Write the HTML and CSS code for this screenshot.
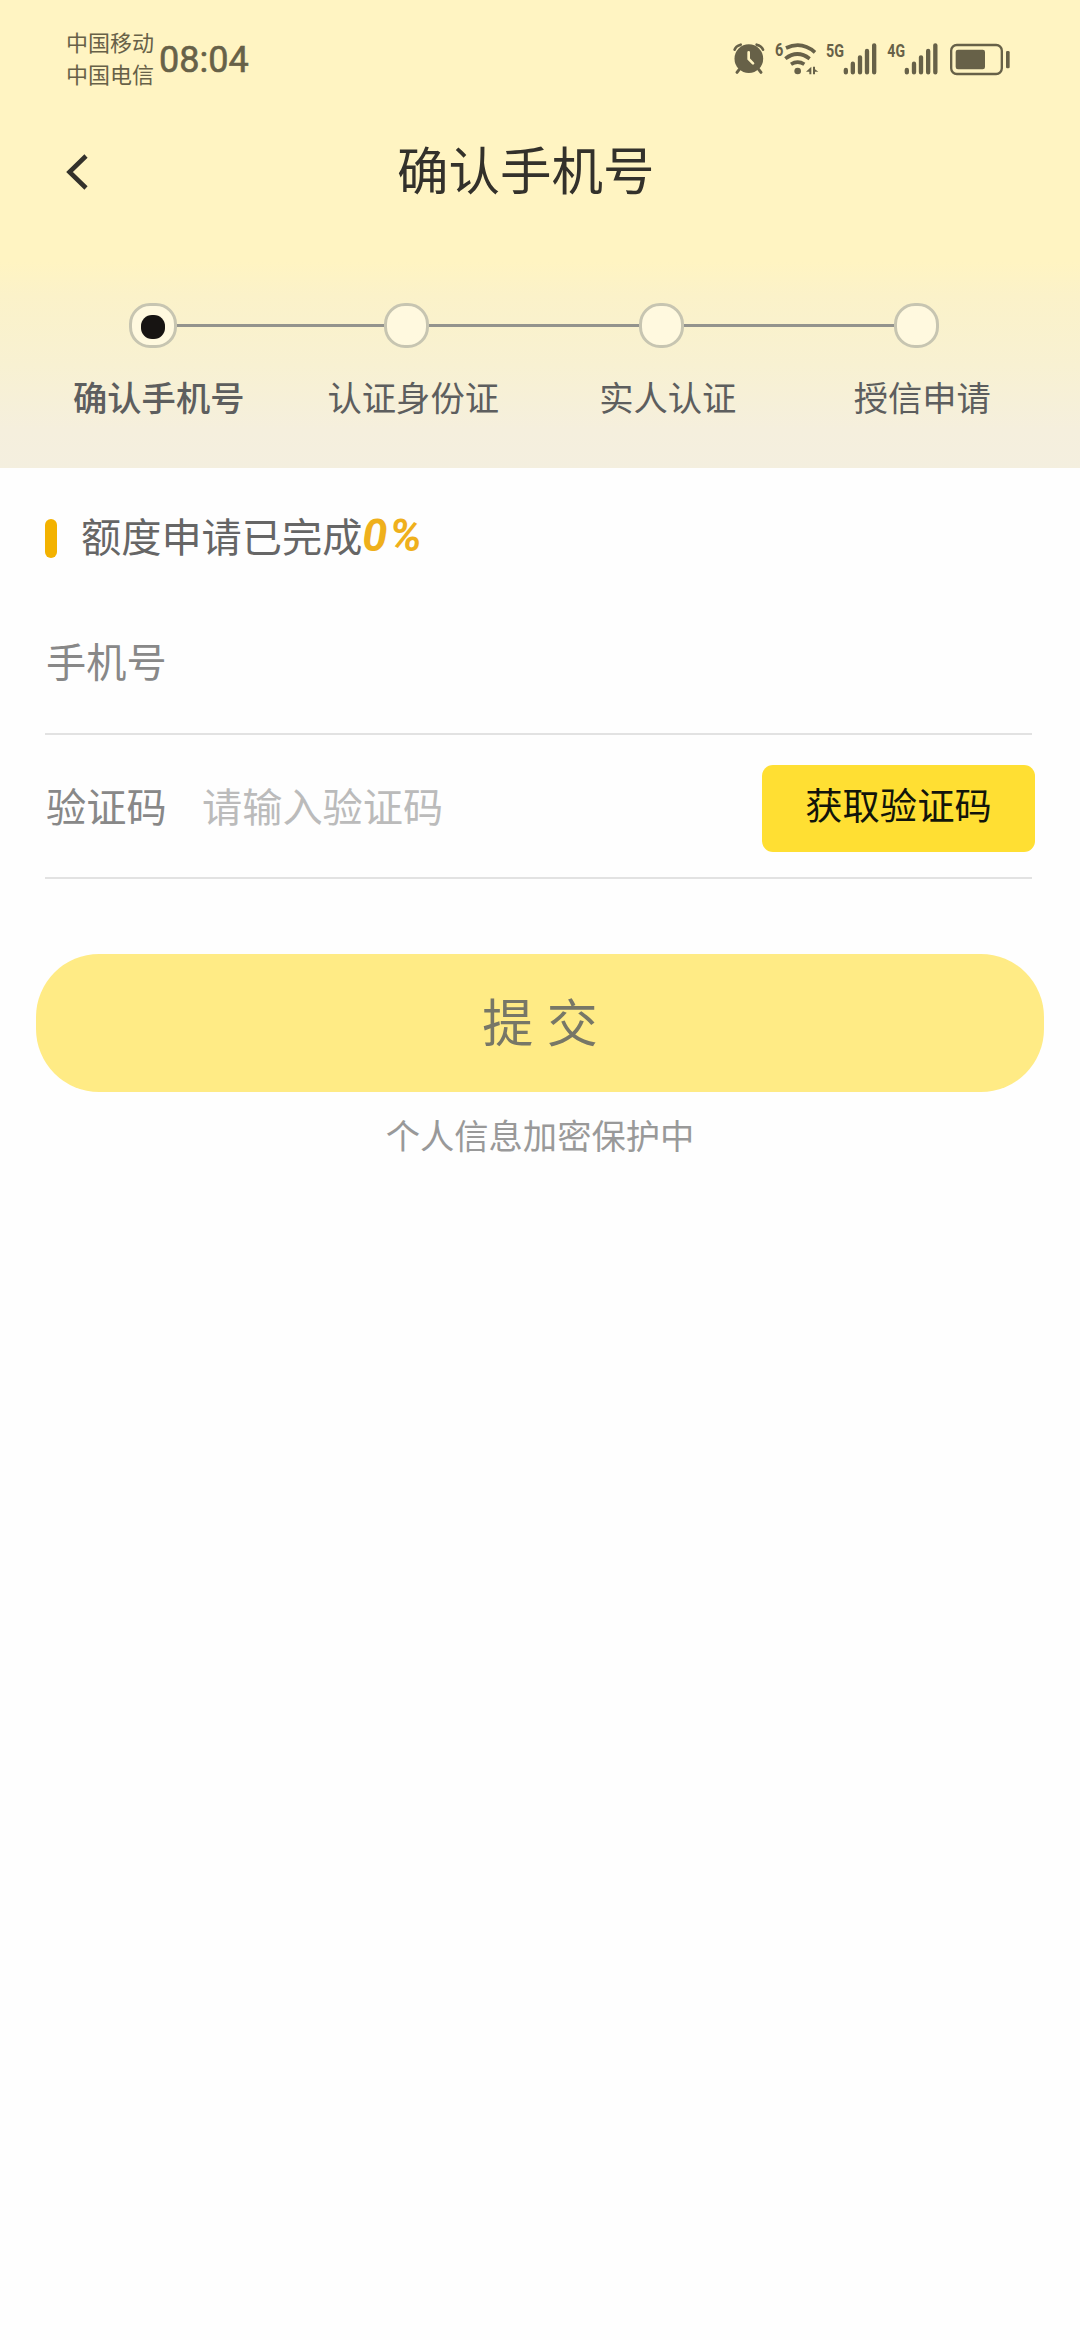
FILE: index.html
```html
<!DOCTYPE html>
<html lang="zh-CN">
<head>
	<meta charset="UTF-8">
	<title>确认手机号</title>
	<link rel="stylesheet" href="styles.css">
</head>
<body>
	<div class="header">
		<!--状态栏-->
		<div class="status">
			<div class="carrier">
				<span>中国移动</span>
				<span>中国电信</span>
			</div>
			<span class="time">08:04</span>
			<svg class="icons" viewBox="0 0 990 240">
				<!--闹钟-->
				<g fill="none" stroke="#676148" stroke-linecap="round">
					<path d="M74 89Q77 78 92 74M140 74Q155 78 159 89" stroke-width="8"/>
					<path d="M88 148L81 157M146 148L153 157" stroke-width="9"/>
				</g>
				<circle cx="116.500" cy="116" r="43" fill="#676148"/>
				<path d="M116 97V117L129 130" fill="none" stroke="#fff4c2" stroke-width="8" stroke-linecap="round"/>
				<!--wifi-->
				<g fill="none" stroke="#676148" stroke-width="11">
					<path d="M228 84Q275 62 315 97"/>
					<path d="M226 116Q262 88 299 116"/>
					<path d="M243 133Q263 120 283 133"/>
				</g>
				<circle cx="263" cy="153" r="10" fill="#676148"/>
				<path d="M304 140V163H298V155H288ZM309 140V163H315V155H325L315 148V140Z" fill="#676148"/>
				<g class="net">
					<text x="195" y="108" textLength="25" lengthAdjust="spacingAndGlyphs">6</text>
					<text x="348" y="111" textLength="54" lengthAdjust="spacingAndGlyphs">5G</text>
					<text x="532" y="111" textLength="53" lengthAdjust="spacingAndGlyphs">4G</text>
				</g>
				<!--信号-->
				<g stroke="#676148" stroke-width="13" stroke-linecap="round">
					<path d="M407.500 150V157M428.500 131V157M450 112V157M471 93V157M492.500 76V157"/>
					<path d="M590.500 150V157M612 131V157M633 112V157M654.500 93V157M676 76V157"/>
				</g>
				<!--电池-->
				<rect x="723.500" y="75" width="152" height="87" rx="17" fill="none" stroke="#676148" stroke-width="7"/>
				<rect x="737" y="89" width="88" height="59" rx="7" fill="#676148"/>
				<rect x="888" y="93" width="11" height="52" rx="4" fill="#676148"/>
			</svg>
		</div>
		<div class="nav">
			<svg class="back" viewBox="0 0 24 38"><path d="M21 3L4.500 19L21 35"/></svg>
			<h1>确认手机号</h1>
		</div>
		<!--步骤条-->
		<div class="rail">
			<span class="dot active"><i></i></span>
			<span class="line first"></span>
			<span class="dot"></span>
			<span class="line"></span>
			<span class="dot"></span>
			<span class="line"></span>
			<span class="dot"></span>
		</div>
		<div class="labels">
			<span class="on">确认手机号</span>
			<span>认证身份证</span>
			<span>实人认证</span>
			<span>授信申请</span>
		</div>
	</div>

	<div class="progress"><span>额度申请已完成</span><em>0%</em></div>
	<div class="row phone">
		<label>手机号</label>
	</div>
	<div class="row">
		<label>验证码</label>
		<input type="text" placeholder="请输入验证码">
		<button class="code">获取验证码</button>
	</div>
	<button class="submit">提 交</button>
	<p class="tip">个人信息加密保护中</p>
</body>
</html>
```

FILE: styles.css
```css
html,body{
	margin: 0;padding: 0;background: #fefefe;
}
body{
	width: 1080px;height: 2340px;overflow: hidden;
	font-family: "Noto Sans CJK SC",sans-serif;
}
input,button{
	font-family: inherit;border: 0;padding: 0;margin: 0;outline: none;
}
.header{
	height: 468px;
	background: linear-gradient(#fff4c2 0,#fff4c2 262px,#fbf2c9 295px,#f8f1d2 365px,#f5efdd 430px,#f4efdf 468px);
}
.status{
	display: flex;height: 120px;
	padding: 0 40px 0 66px;
}
.carrier{
	display: flex;flex-direction: column;
	width: 93px;padding-top: 25px;
	font-size: 22px;line-height: 32px;color: #676148;white-space: nowrap;
}
.time{
	padding-top: 39px;
	font: 400 36px/42px Roboto,sans-serif;color: #676148;
	-webkit-text-stroke: .6px #676148;
}
.icons{
	width: 330px;height: 80px;
	margin: 20px 0 0 auto;
}
.net{
	font-family: Roboto,sans-serif;font-size: 54px;font-weight: 700;fill: #676148;
}
.nav{
	display: flex;align-items: center;height: 100px;
	padding: 0 65px;
}
.back{
	width: 24px;height: 38px;margin-top: 3px;
	fill: none;stroke: #33312b;stroke-width: 4.6;
}
.nav h1{
	margin: 0 0 5px 308px;
	font-size: 51.5px;font-weight: 400;line-height: 70px;color: #33312b;
}
.rail{
	display: flex;align-items: center;
	height: 45px;padding: 83px 0 0 129px;
}
.dot{
	display: flex;align-items: center;justify-content: center;
	box-sizing: border-box;width: 45px;height: 45px;
	border: 3px solid #c7c5b1;border-radius: 21px;background: #fff9df;
}
.active{
	width: 48px;
}
.dot i{
	width: 24px;height: 24px;margin-top: 3px;border-radius: 11px;background: #171412;
}
.line{
	width: 210px;height: 3px;background: #93938d;
}
.first{
	width: 207px;
}
.labels{
	display: grid;grid-template-columns: repeat(4,254.5px);
	padding: 23px 0 0 31.5px;
	font-size: 34.3px;line-height: 50px;color: #5d5e5e;text-align: center;
}
.on{
	font-weight: 500;
}
.progress{
	display: flex;align-items: center;height: 60px;
	margin: 39px 45px 0;
	font-size: 40.2px;line-height: 60px;color: #666;
}
.progress:before{
	content: "";
	width: 12px;height: 39px;margin: 3px 24px 0 0;
	border-radius: 6px;background: #f3b200;
}
.progress span{
	margin-bottom: 4px;
}
.progress em{
	margin-bottom: 2px;
	font: italic 700 45px/60px Roboto,sans-serif;letter-spacing: 2px;color: #efb01c;
}
.row{
	display: flex;align-items: center;height: 142px;
	margin: 0 48px 0 45px;border-bottom: 2px solid #e2e2e2;
	font-size: 40.2px;color: #888;
}
.phone{
	height: 166px;
}
.row label{
	width: 156px;margin-bottom: 3px;padding-left: 1px;
}
.phone label{
	margin: 19px 0 0;
}
.row input{
	flex: 1;min-width: 0;height: 80px;margin-bottom: 3px;
	font-size: 40.2px;color: #333;background: none;
}
.row input::placeholder{
	color: #bbb;
}
.code{
	width: 273px;height: 87px;margin: 4px -3px 0 0;padding-bottom: 9px;
	border-radius: 11px;background: #ffdf33;
	font-size: 37.3px;color: #12140a;
}
.submit{
	display: block;width: 1008px;height: 138px;
	margin: 75px 36px 0;padding-bottom: 6px;
	border-radius: 63px;background: #ffeb85;
	font-size: 51px;word-spacing: 2px;color: #777767;
}
.tip{
	margin: 17px 0 0;
	font-size: 34.3px;line-height: 50px;color: #999;text-align: center;
}
```
